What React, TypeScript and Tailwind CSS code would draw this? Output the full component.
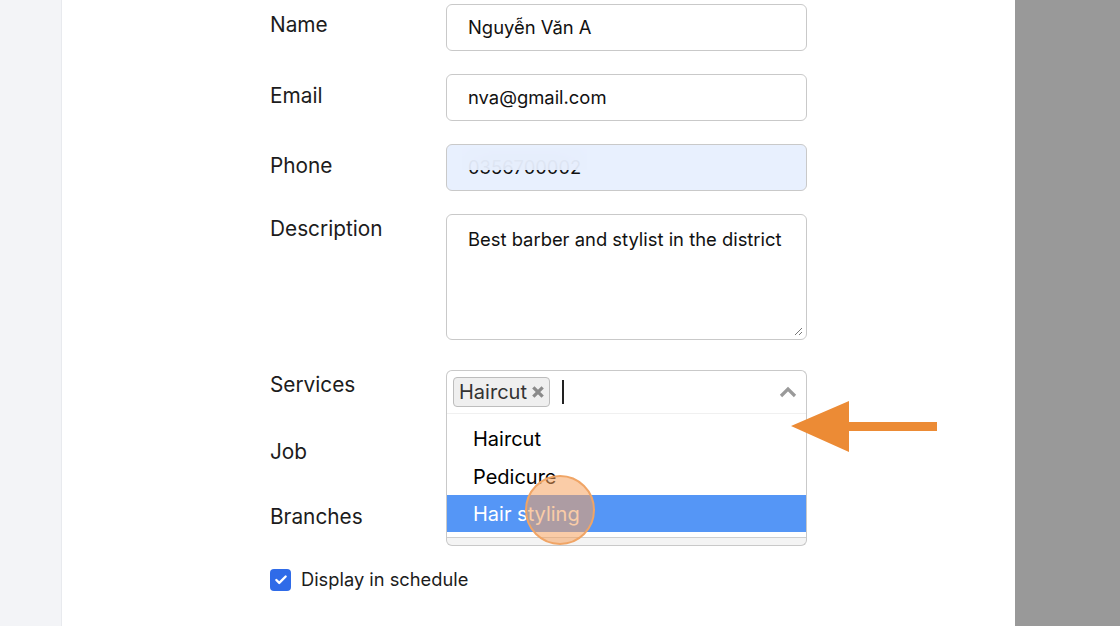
import { Check } from 'lucide-react';

const font = { fontFamily: 'Inter, "Noto Sans", sans-serif' };

const Label = ({ text, className = '' }: { text: string; className?: string }) => (
  <div className={`w-[176px] shrink-0 text-[20.8px] leading-7 text-[#1c1c1c] ${className}`}>{text}</div>
);

const App = () => {
  return (
    <div className="flex h-[626px] w-[1120px] overflow-hidden bg-white" style={font}>
      <div className="w-[62px] shrink-0 border-r border-[#e8eaee] bg-[#f3f4f7]" />

      <main className="relative flex-1 pl-[208px] pt-[4px]">
        {/* Name */}
        <div className="flex">
          <Label text="Name" className="pt-[7px]" />
          <div className="flex h-[47px] w-[361px] items-center rounded-md border border-[#c9c9c9] px-[21px] text-[18.4px] text-[#111]">
            Nguyễn Văn A
          </div>
        </div>

        {/* Email */}
        <div className="mt-[23px] flex">
          <Label text="Email" className="pt-[8px]" />
          <div className="flex h-[47px] w-[361px] items-center rounded-md border border-[#c9c9c9] px-[21px] text-[18.4px] text-[#111]">
            nva@gmail.com
          </div>
        </div>

        {/* Phone */}
        <div className="mt-[23px] flex">
          <Label text="Phone" className="pt-[8px]" />
          <div className="relative flex h-[47px] w-[361px] items-center overflow-hidden rounded-md border border-[#c9c9c9] bg-[#e8f0fe] px-[21px] text-[18.4px] text-[#111]">
            <span className="relative">
              0356700002
              <span className="absolute inset-x-[-6px] top-[-6px] h-[22px] bg-[#e8f0fe]/90 backdrop-blur-md" />
            </span>
          </div>
        </div>

        {/* Description */}
        <div className="mt-[23px] flex">
          <Label text="Description" className="pt-[1px]" />
          <div className="relative h-[126px] w-[361px] rounded-md border border-[#c9c9c9] px-[21px] pt-[10px] text-[18.4px] leading-7 text-[#111]">
            Best barber and stylist in the district
            <svg className="absolute bottom-[3px] right-[3px]" width="9" height="9" viewBox="0 0 9 9">
              <path d="M8 1L1 8M8 5L5 8" stroke="#777" strokeWidth="1" />
            </svg>
          </div>
        </div>

        {/* Services */}
        <div className="mt-[30px] flex">
          <Label text="Services" className="pt-[1px]" />
          <div className="relative w-[361px]">
            <div className="flex h-[43px] items-center rounded-t-md border border-b-0 border-[#c9c9c9] pl-[6px] pr-[8px]">
              <div className="flex h-[30px] items-center gap-[4px] rounded-[4px] border border-[#bdbdbd] bg-[#efefef] pl-[5px] pr-[4px] text-[20px] text-[#333]">
                Haircut
                <svg width="14" height="14" viewBox="0 0 12 12">
                  <path d="M2 2L10 10M10 2L2 10" stroke="#8a8a8a" strokeWidth="2.8" />
                </svg>
              </div>
              <div className="ml-[12px] h-[24px] w-[2px] bg-[#222]" />
              <svg className="ml-auto" width="20" height="14" viewBox="0 0 20 14">
                <path d="M3 11L10 4L17 11" stroke="#9a9a9a" strokeWidth="3.2" fill="none" />
              </svg>
            </div>

            {/* dropdown menu */}
            <div className="absolute left-0 right-0 top-[43px] z-10 rounded-b-md border border-t-0 border-[#c9c9c9] bg-[#f4f4f4]">
              <div className="border-b border-t border-b-[#cfcfcf] border-t-[#f0f0f0] bg-white pb-[5px] pt-[6px] text-[20px] text-black">
                <div className="flex h-[38px] items-center pl-[26px]">Haircut</div>
                <div className="flex h-[37px] items-center pl-[26px]">Pedicure</div>
                <div className="flex h-[37px] items-center bg-[#5596f6] pl-[26px] text-white">Hair styling</div>
              </div>
              <div className="h-[7px]" />
            </div>
          </div>
        </div>

        {/* Job */}
        <div className="mt-[24px] flex">
          <Label text="Job" className="pt-[1px]" />
          <div className="h-[42px] w-[361px] rounded-md border border-[#c9c9c9]" />
        </div>

        {/* Branches */}
        <div className="mt-[23px] flex">
          <Label text="Branches" className="pt-[1px]" />
          <div className="h-[42px] w-[361px] rounded-md border border-[#c9c9c9]" />
        </div>

        {/* Display in schedule */}
        <div className="mt-[22px] flex items-center gap-[10px]">
          <div className="flex h-[22px] w-[21px] items-center justify-center rounded-[4px] bg-[#2f6be8]">
            <Check className="h-[14px] w-[14px] text-white" strokeWidth={4} />
          </div>
          <span className="text-[18.3px] text-[#1c1c1c]">Display in schedule</span>
        </div>

        {/* click indicator */}
        <div className="absolute left-[463px] top-[475px] z-20 h-[70px] w-[70px] rounded-full border-2 border-[#f0a566] bg-[#f5a25f]/55" />

        {/* annotation arrow */}
        <svg className="absolute left-[728px] top-[400px] z-20" width="150" height="54" viewBox="0 0 150 54">
          <path d="M1 26L59 1V22H147V31H59V52Z" fill="#ec8b35" />
        </svg>
      </main>

      <div className="w-[105px] shrink-0 bg-[#999999]" />
    </div>
  );
};

export default App;
